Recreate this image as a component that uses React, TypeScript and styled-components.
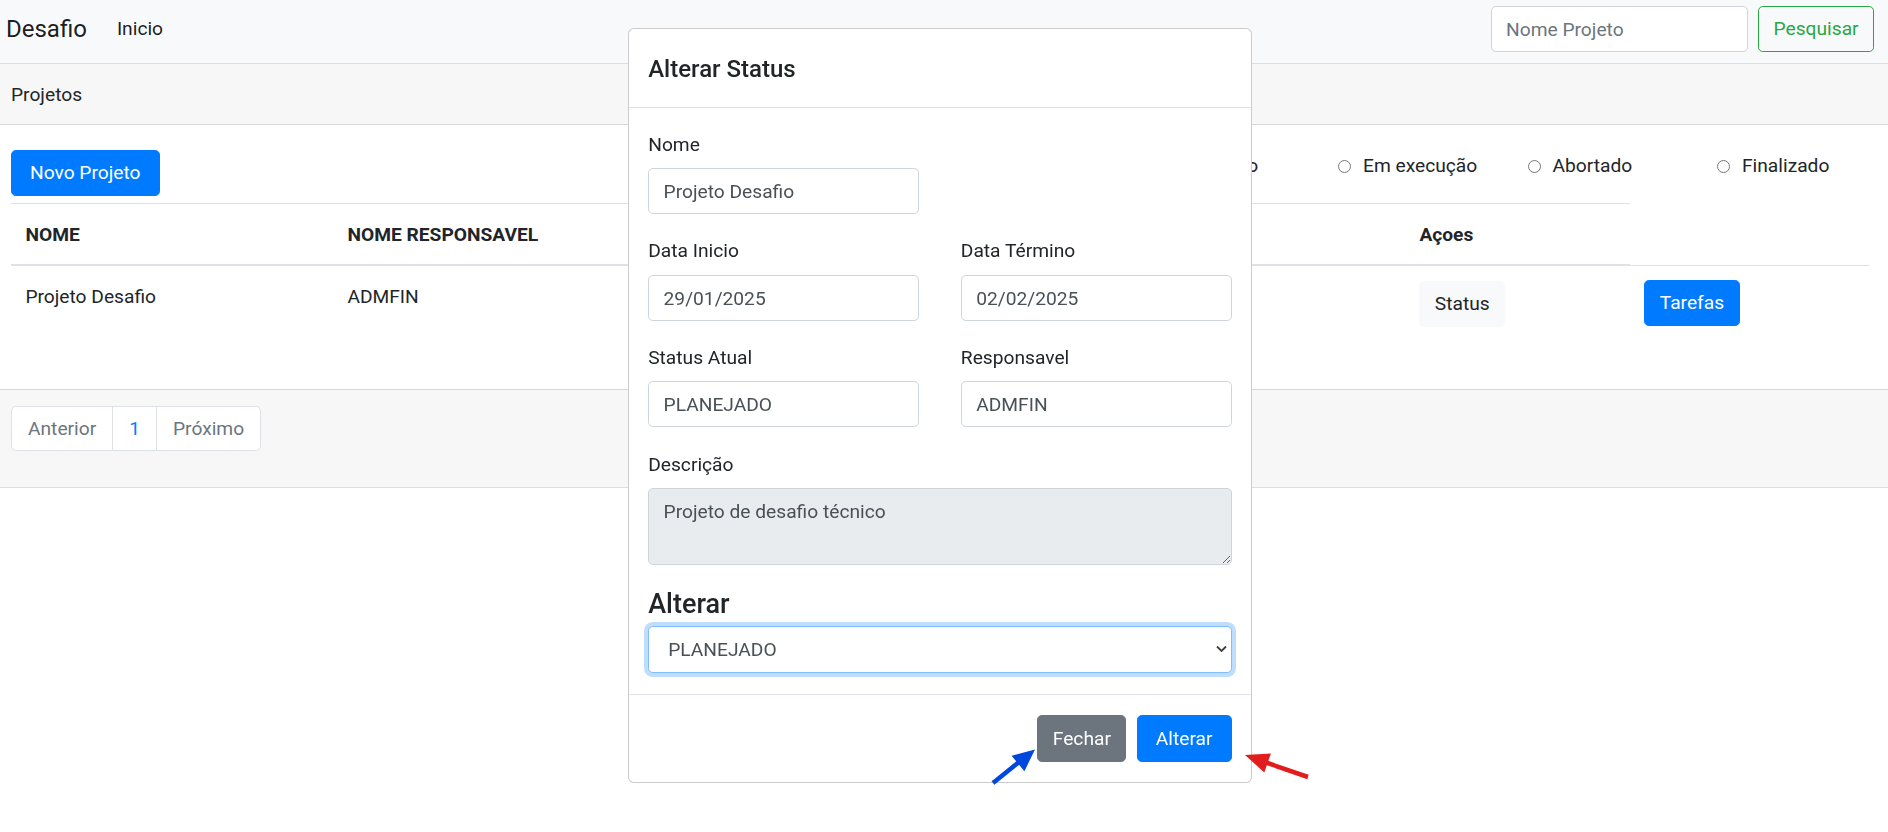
import React from 'react';
import styled, { createGlobalStyle, css } from 'styled-components';

const GlobalStyle = createGlobalStyle`
  * {
    box-sizing: border-box;
  }

  body {
    margin: 0;
    font-family: Roboto, "Liberation Sans", Arial, sans-serif;
    font-size: 19.2px;
    line-height: 1.5;
    color: #212529;
    background-color: #fff;
  }
`;

const Navbar = styled.nav`
  display: flex;
  align-items: center;
  height: 63px;
  padding: 6px 14px 11px 6px;
  background-color: #f8f9fa;
`;

const Brand = styled.a`
  font-size: 24px;
  line-height: 36px;
  color: rgba(0, 0, 0, 0.9);
  text-decoration: none;
  margin-right: 30px;
`;

const NavLink = styled.a`
  font-size: 19.2px;
  line-height: 28.8px;
  color: rgba(0, 0, 0, 0.9);
  text-decoration: none;
`;

const SearchForm = styled.form`
  display: flex;
  gap: 10.5px;
  margin-left: auto;
`;

const SearchInput = styled.input`
  width: 257px;
  height: 46px;
  padding: 0 14.4px;
  font-family: inherit;
  font-size: 19.2px;
  color: #495057;
  border: 1px solid #ced4da;
  border-radius: 4.8px;
  background-color: #fff;

  &::placeholder {
    color: #6c757d;
  }
`;

type Variant = 'primary' | 'secondary' | 'light' | 'outline-success';

const variants: Record<Variant, ReturnType<typeof css>> = {
  primary: css`
    background-color: #007bff;
    border-color: #007bff;
    color: #fff;
  `,
  secondary: css`
    background-color: #6c757d;
    border-color: #6c757d;
    color: #fff;
  `,
  light: css`
    background-color: #f8f9fa;
    border-color: #f8f9fa;
    color: #212529;
  `,
  'outline-success': css`
    background-color: transparent;
    border-color: #28a745;
    color: #28a745;
  `,
};

const Button = styled.button<{ $variant: Variant; $wide?: boolean }>`
  height: 46px;
  padding: 0 ${props => (props.$wide ? '18px' : '14.4px')};
  font-family: inherit;
  font-size: 19.2px;
  line-height: 1;
  border: 1px solid transparent;
  border-radius: 4.8px;
  cursor: pointer;
  white-space: nowrap;
  ${props => variants[props.$variant]}
`;

const Card = styled.section`
  border-top: 1px solid rgba(0, 0, 0, 0.125);
  border-bottom: 1px solid rgba(0, 0, 0, 0.125);
`;

const CardHeader = styled.div`
  padding: 17px 11px 14.2px;
  line-height: 28.8px;
  background-color: rgba(0, 0, 0, 0.03);
  border-bottom: 1px solid rgba(0, 0, 0, 0.125);
`;

const CardBody = styled.div`
  padding: 25px 19px 29px 11px;
`;

const Toolbar = styled.div`
  display: flex;
  align-items: flex-start;
  margin-bottom: 7px;
`;

const RadioGroup = styled.div`
  display: grid;
  grid-template-columns: repeat(3, 189.5px) 152px;
  margin-left: auto;
  padding-top: 2px;
`;

const RadioLabel = styled.label`
  display: flex;
  align-items: center;
  gap: 12px;
  line-height: 28.8px;
  white-space: nowrap;
  cursor: pointer;
`;

const RadioInput = styled.input`
  width: 13px;
  height: 13px;
  margin: 0;
`;

const Table = styled.table`
  width: 100%;
  border-collapse: collapse;
  table-layout: fixed;
  margin-bottom: 19px;
`;

const Th = styled.th`
  padding: 17px 14.4px 14.4px;
  line-height: 28.8px;
  text-align: left;
  font-weight: 700;
  vertical-align: bottom;
  border-top: 1px solid #dee2e6;
  border-bottom: 2px solid #dee2e6;
`;

const Td = styled.td`
  padding: 14.4px;
  line-height: 28.8px;
  vertical-align: top;
  border-top: 1px solid #dee2e6;
`;

const CellText = styled.span`
  display: block;
  padding-top: 2px;
`;

const CardFooter = styled.div`
  padding: 16px 11px 17px;
  background-color: rgba(0, 0, 0, 0.03);
  border-top: 1px solid rgba(0, 0, 0, 0.125);
`;

const Pagination = styled.ul`
  display: flex;
  list-style: none;
  margin: 0 0 19px;
  padding: 0;
`;

const PageItem = styled.li<{ $active?: boolean }>`
  padding: 8.2px 16px 6.2px;
  line-height: 28.8px;
  background-color: #fff;
  border: 1px solid #dee2e6;
  color: ${props => (props.$active ? '#007bff' : '#6c757d')};

  & + & {
    margin-left: -1px;
  }

  &:first-child {
    border-radius: 4.8px 0 0 4.8px;
  }

  &:last-child {
    border-radius: 0 4.8px 4.8px 0;
  }
`;

const Dialog = styled.div`
  position: fixed;
  top: 28px;
  left: 628px;
  width: 624px;
  background-color: #fff;
  border: 1px solid rgba(0, 0, 0, 0.2);
  border-radius: 5.76px;
  z-index: 10;
`;

const ModalHeader = styled.div`
  padding: 22px 19.2px 20px;
  border-bottom: 1px solid #dee2e6;
`;

const ModalTitle = styled.h5`
  margin: 0;
  font-size: 24px;
  font-weight: 500;
  line-height: 36px;
`;

const ModalBody = styled.div`
  padding: 21px 19.2px 21px;
`;

const FormRow = styled.div`
  display: grid;
  grid-template-columns: 271px 271px;
  justify-content: space-between;
`;

const FormGroup = styled.div`
  margin-bottom: 22px;
`;

const Label = styled.label`
  display: block;
  padding-top: 1.5px;
  margin-bottom: 8.5px;
  line-height: 28.8px;
`;

const Input = styled.input`
  display: block;
  width: 100%;
  height: 46px;
  padding: 1px 14.4px 0;
  font-family: inherit;
  font-size: 19.2px;
  color: #495057;
  background-color: #fff;
  border: 1px solid #ced4da;
  border-radius: 4.8px;
`;

const TextArea = styled.textarea`
  display: block;
  width: 100%;
  height: 76.4px;
  padding: 8.5px 14.4px 6px;
  font-family: inherit;
  font-size: 19.2px;
  line-height: 28.8px;
  color: #495057;
  background-color: #e9ecef;
  border: 1px solid #ced4da;
  border-radius: 4.8px;
  resize: vertical;
`;

const SectionHeading = styled.h4`
  margin: 0 0 6.4px;
  padding-top: 2px;
  font-size: 27px;
  font-weight: 500;
  line-height: 30.9px;
`;

const SelectWrap = styled.div`
  position: relative;
`;

const Select = styled.select`
  display: block;
  width: 100%;
  height: 46.7px;
  padding: 1px 40px 0 19px;
  font-family: inherit;
  font-size: 19.2px;
  color: #495057;
  background-color: #fff;
  border: 1px solid #80bdff;
  border-radius: 4.8px;
  box-shadow: 0 0 0 4px rgba(0, 123, 255, 0.25);
  outline: none;
  appearance: none;
`;

const Chevron = styled.svg`
  position: absolute;
  right: 5px;
  top: 50%;
  width: 11px;
  height: 7px;
  transform: translateY(-50%);
  pointer-events: none;
`;

const ModalFooter = styled.div`
  display: flex;
  justify-content: flex-end;
  gap: 10.5px;
  padding: 20.5px 19.5px 20px;
  border-top: 1px solid #dee2e6;

  & > button {
    height: 46.7px;
  }
`;

const Annotations = styled.svg`
  position: fixed;
  top: 0;
  left: 0;
  width: 1888px;
  height: 832px;
  pointer-events: none;
  z-index: 20;
`;

const statuses = ['Planejado', 'Em execução', 'Abortado', 'Finalizado'];

const App: React.FC = () => {
  return (
    <>
      <GlobalStyle />
      <Navbar>
        <Brand href="#">Desafio</Brand>
        <NavLink href="#">Inicio</NavLink>
        <SearchForm onSubmit={e => e.preventDefault()}>
          <SearchInput placeholder="Nome Projeto" />
          <Button $variant="outline-success" type="submit">Pesquisar</Button>
        </SearchForm>
      </Navbar>

      <Card>
        <CardHeader>Projetos</CardHeader>
        <CardBody>
          <Toolbar>
            <Button $variant="primary" $wide>Novo Projeto</Button>
            <RadioGroup>
              {statuses.map(status => (
                <RadioLabel key={status}>
                  <RadioInput type="radio" name="status" />
                  {status}
                </RadioLabel>
              ))}
            </RadioGroup>
          </Toolbar>

          <Table>
            <colgroup>
              <col style={{ width: 322 }} />
              <col style={{ width: 307 }} />
              <col style={{ width: 200 }} />
              <col style={{ width: 200 }} />
              <col style={{ width: 365 }} />
              <col style={{ width: 225 }} />
              <col style={{ width: 239 }} />
            </colgroup>
            <thead>
              <tr>
                <Th>NOME</Th>
                <Th>NOME RESPONSAVEL</Th>
                <Th />
                <Th />
                <Th />
                <Th>Açoes</Th>
              </tr>
            </thead>
            <tbody>
              <tr>
                <Td><CellText>Projeto Desafio</CellText></Td>
                <Td><CellText>ADMFIN</CellText></Td>
                <Td />
                <Td />
                <Td />
                <Td><Button $variant="light">Status</Button></Td>
                <Td><Button $variant="primary">Tarefas</Button></Td>
              </tr>
            </tbody>
          </Table>
        </CardBody>
        <CardFooter>
          <Pagination>
            <PageItem>Anterior</PageItem>
            <PageItem $active>1</PageItem>
            <PageItem>Próximo</PageItem>
          </Pagination>
        </CardFooter>
      </Card>

      <Dialog role="dialog">
        <ModalHeader>
          <ModalTitle>Alterar Status</ModalTitle>
        </ModalHeader>
        <ModalBody>
          <FormRow>
            <FormGroup>
              <Label>Nome</Label>
              <Input defaultValue="Projeto Desafio" />
            </FormGroup>
          </FormRow>
          <FormRow>
            <FormGroup>
              <Label>Data Inicio</Label>
              <Input defaultValue="29/01/2025" />
            </FormGroup>
            <FormGroup>
              <Label>Data Término</Label>
              <Input defaultValue="02/02/2025" />
            </FormGroup>
          </FormRow>
          <FormRow>
            <FormGroup>
              <Label>Status Atual</Label>
              <Input defaultValue="PLANEJADO" />
            </FormGroup>
            <FormGroup>
              <Label>Responsavel</Label>
              <Input defaultValue="ADMFIN" />
            </FormGroup>
          </FormRow>
          <FormGroup>
            <Label>Descrição</Label>
            <TextArea readOnly defaultValue="Projeto de desafio técnico" />
          </FormGroup>
          <SectionHeading>Alterar</SectionHeading>
          <SelectWrap>
            <Select defaultValue="PLANEJADO">
              <option value="PLANEJADO">PLANEJADO</option>
              <option value="EM_EXECUCAO">EM EXECUÇÃO</option>
              <option value="ABORTADO">ABORTADO</option>
              <option value="FINALIZADO">FINALIZADO</option>
            </Select>
            <Chevron viewBox="0 0 11 7">
              <path d="M1 1l4.5 4.5L10 1" fill="none" stroke="#3c4043" strokeWidth="1.8" />
            </Chevron>
          </SelectWrap>
        </ModalBody>
        <ModalFooter>
          <Button $variant="secondary">Fechar</Button>
          <Button $variant="primary" $wide>Alterar</Button>
        </ModalFooter>
      </Dialog>

      <Annotations viewBox="0 0 1888 832">
        <line x1="993" y1="783" x2="1019" y2="762" stroke="#0047de" strokeWidth="4.5" />
        <polygon points="1035,749.5 1024.4,771.2 1011.6,755.8" fill="#0047de" />
        <line x1="1308" y1="777" x2="1266" y2="762.5" stroke="#e11d1d" strokeWidth="4.5" />
        <polygon points="1245,755 1270.9,753.6 1264.3,772.4" fill="#e11d1d" />
      </Annotations>
    </>
  );
};

export default App;
